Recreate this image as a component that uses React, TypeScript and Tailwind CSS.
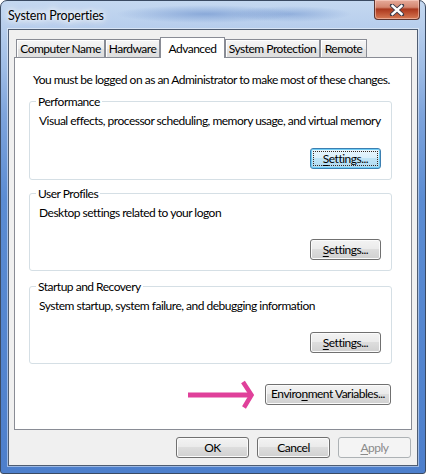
import React from "react";

type BtnProps = {
  children: React.ReactNode;
  w: string;
  variant?: "normal" | "focus" | "disabled";
};

function Btn({ children, w, variant = "normal" }: BtnProps) {
  if (variant === "focus") {
    return (
      <div
        className={`${w} relative h-[21px] shrink-0 rounded-[3px] border border-[#3c7fb1] bg-[linear-gradient(180deg,#eaf6fd_0%,#dcf0fb_45%,#c1e5f7_50%,#aed9f1_100%)] shadow-[inset_0_0_0_1px_#6fcdf6] flex items-center justify-center text-black`}
      >
        <span className="absolute inset-[2px] border border-dotted border-[#3a2a22]" />
        <span className="relative">{children}</span>
      </div>
    );
  }
  if (variant === "disabled") {
    return (
      <div
        className={`${w} h-[21px] shrink-0 rounded-[3px] border border-[#adb2b5] bg-[#f4f4f4] flex items-center justify-center text-[#8a8a8a]`}
      >
        {children}
      </div>
    );
  }
  return (
    <div
      className={`${w} h-[21px] shrink-0 rounded-[3px] border border-[#707070] bg-[linear-gradient(180deg,#f3f3f3_0%,#ebebeb_45%,#dddddd_50%,#d0d0d0_100%)] shadow-[inset_0_0_0_1px_#fbfbfb] flex items-center justify-center text-black`}
    >
      {children}
    </div>
  );
}

function Tab({ label, w, selected }: { label: string; w: string; selected?: boolean }) {
  if (selected) {
    return (
      <div
        className={`${w} relative z-10 h-[21px] mb-[-1px] border-t border-x border-[#898c95] bg-white flex items-start justify-center pt-[2px] shrink-0`}
      >
        {label}
      </div>
    );
  }
  return (
    <div
      className={`${w} h-[18px] border-t border-x border-[#898c95] bg-[linear-gradient(180deg,#f6f6f6_0%,#ededed_50%,#e3e3e3_51%,#dedede_100%)] shadow-[inset_1px_1px_0_#ffffff] flex items-center justify-center pt-[1px] shrink-0`}
    >
      {label}
    </div>
  );
}

function GroupBox({
  title,
  desc,
  h,
  mt,
  focus,
}: {
  title: string;
  desc: string;
  h: string;
  mt: string;
  focus?: boolean;
}) {
  return (
    <div
      className={`${h} ${mt} relative shrink-0 rounded-[3px] border border-[#d5dfe5] flex flex-col pl-[9px] pr-[10px] pt-[11px] pb-[10px]`}
    >
      <span className="absolute left-[6px] top-[-8px] bg-white px-[2px] leading-[15px]">{title}</span>
      <p className="leading-[15px] whitespace-nowrap">{desc}</p>
      <div className="mt-auto flex justify-end">
        <Btn w="w-[71px]" variant={focus ? "focus" : "normal"}>
          <span>
            <span className="underline underline-offset-[2px]">S</span>ettings...
          </span>
        </Btn>
      </div>
    </div>
  );
}

export default function App() {
  return (
    <div className="relative w-[426px] h-[474px] flex flex-col border border-[#3a4a62] rounded-t-[7px] rounded-b-[3px] px-[7px] pb-[7px] font-['Lato',sans-serif] text-[12px] tracking-[-0.5px] text-black bg-[radial-gradient(ellipse_90px_9px_at_205px_13px,rgba(95,135,200,0.55),transparent),radial-gradient(ellipse_60px_8px_at_290px_13px,rgba(95,135,200,0.45),transparent),linear-gradient(180deg,#c4d8f0_0%,#b6cdec_6%,#9fbde6_14%,#7ea4dc_24%,#5b8cd3_42%,#4d7fcc_100%)]">
      {/* title bar */}
      <div className="h-[28px] shrink-0 flex items-center">
        <span className="text-[12.5px] tracking-[-0.2px] leading-[15px] [text-shadow:0_0_5px_#ffffff,0_0_8px_#ffffff,0_0_12px_#ffffff]">
          System Properties
        </span>
      </div>
      {/* close button */}
      <div className="absolute right-[5px] top-[-1px] w-[46px] h-[20px] rounded-b-[4px] border border-t-0 border-[#5c3530] bg-[linear-gradient(180deg,#e6ab9b_0%,#d48670_38%,#a9391f_48%,#b8482a_62%,#d67a55_100%)] shadow-[inset_0_0_0_1px_rgba(255,220,210,0.5)] flex items-center justify-center">
        <svg width="16" height="12" viewBox="0 0 16 12">
          <path
            d="M3 1.5 L13 10.5 M13 1.5 L3 10.5"
            stroke="#3a3a4a"
            strokeWidth="4.2"
            strokeLinecap="round"
          />
          <path
            d="M3.5 2 L12.5 10 M12.5 2 L3.5 10"
            stroke="#ffffff"
            strokeWidth="2.4"
            strokeLinecap="square"
          />
        </svg>
      </div>

      {/* client area */}
      <div className="flex-1 flex flex-col border border-[#4f5d72] bg-[#f0f0f0] px-[5px] pt-[7px] shadow-[0_0_0_1px_rgba(255,255,255,0.45)]">
        {/* tabs */}
        <div className="h-[20px] flex items-end ml-[2px] shrink-0">
          <Tab label="Computer Name" w="w-[89px]" />
          <Tab label="Hardware" w="w-[55px]" />
          <Tab label="Advanced" w="w-[65px]" selected />
          <Tab label="System Protection" w="w-[95px]" />
          <Tab label="Remote" w="w-[47px]" />
        </div>

        {/* panel */}
        <div className="h-[373px] shrink-0 border border-[#898c95] bg-white flex flex-col pl-[14px] pr-[19px] pt-[14px]">
          <p className="ml-[4px] leading-[15px] whitespace-nowrap">
            You must be logged on as an Administrator to make most of these changes.
          </p>
          <GroupBox
            title="Performance"
            desc="Visual effects, processor scheduling, memory usage, and virtual memory"
            h="h-[79px]"
            mt="mt-[14px]"
            focus
          />
          <GroupBox
            title="User Profiles"
            desc="Desktop settings related to your logon"
            h="h-[78px]"
            mt="mt-[13px]"
          />
          <GroupBox
            title="Startup and Recovery"
            desc="System startup, system failure, and debugging information"
            h="h-[78px]"
            mt="mt-[15px]"
          />
          <div className="mt-[15px] flex justify-end items-center pr-[1px]">
            <svg width="70" height="30" viewBox="0 0 70 30" className="mr-[9px] shrink-0">
              <path d="M2 16 L63 16" stroke="#e0409a" strokeWidth="5" />
              <path
                d="M57 3 L65.5 16 L58 28.5"
                stroke="#e0409a"
                strokeWidth="4.5"
                fill="none"
                strokeLinejoin="miter"
              />
            </svg>
            <Btn w="w-[126px]">
              <span>
                Enviro<span className="underline underline-offset-[2px]">n</span>ment Variables...
              </span>
            </Btn>
          </div>
        </div>

        {/* bottom buttons */}
        <div className="mt-[7px] flex justify-end gap-[8px] pr-[1px] shrink-0">
          <Btn w="w-[73px]">OK</Btn>
          <Btn w="w-[73px]">Cancel</Btn>
          <Btn w="w-[73px]" variant="disabled">
            <span>
              <span className="underline underline-offset-[2px]">A</span>pply
            </span>
          </Btn>
        </div>
      </div>
    </div>
  );
}
